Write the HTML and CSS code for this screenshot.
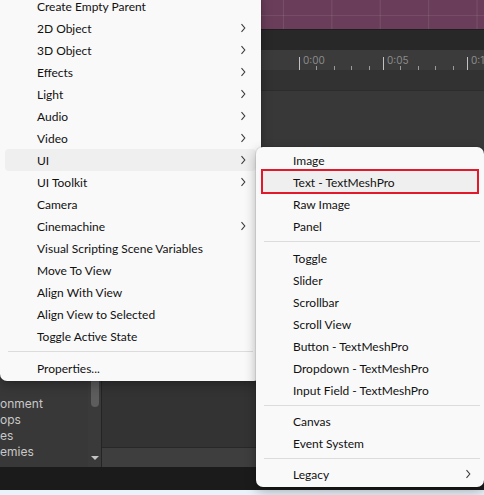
FILE: index.html
```html
<!DOCTYPE html>
<html>
<head>
<meta charset="utf-8">
<link rel="stylesheet" href="styles.css">
</head>
<body>
<div class="editor">
  <div class="scene"></div>
  <div class="toolbar"></div>
  <div class="ruler">
    <div class="ruler-spacer"></div>
    <div class="seg"><span class="major"></span><span class="lbl">0:00</span></div>
    <div class="seg"><span class="major"></span><span class="lbl">0:05</span></div>
    <div class="seg"><span class="major"></span><span class="lbl">0:10</span></div>
  </div>
  <div class="track-head"></div>
  <div class="main">
    <div class="hierarchy">
      <ul class="h-list">
        <li>onment</li>
        <li>ops</li>
        <li>es</li>
        <li>emies</li>
      </ul>
      <div class="h-scroll">
        <div class="thumb"></div>
        <div class="down"></div>
      </div>
    </div>
    <div class="content">
      <div class="content-upper"></div>
      <div class="content-lower"></div>
      <div class="content-strip"></div>
    </div>
  </div>
  <div class="status"></div>
  <div class="taskbar"></div>
</div>

<div class="menu menu-main">
  <div class="item"><span class="label">Create Empty Parent</span></div>
  <div class="item"><span class="label">2D Object</span><svg class="chev" viewBox="0 0 6 10" width="6" height="10"><path d="M1.5 1.2 L4.8 5 L1.5 8.8"/></svg></div>
  <div class="item"><span class="label">3D Object</span><svg class="chev" viewBox="0 0 6 10" width="6" height="10"><path d="M1.5 1.2 L4.8 5 L1.5 8.8"/></svg></div>
  <div class="item"><span class="label">Effects</span><svg class="chev" viewBox="0 0 6 10" width="6" height="10"><path d="M1.5 1.2 L4.8 5 L1.5 8.8"/></svg></div>
  <div class="item"><span class="label">Light</span><svg class="chev" viewBox="0 0 6 10" width="6" height="10"><path d="M1.5 1.2 L4.8 5 L1.5 8.8"/></svg></div>
  <div class="item"><span class="label">Audio</span><svg class="chev" viewBox="0 0 6 10" width="6" height="10"><path d="M1.5 1.2 L4.8 5 L1.5 8.8"/></svg></div>
  <div class="item"><span class="label">Video</span><svg class="chev" viewBox="0 0 6 10" width="6" height="10"><path d="M1.5 1.2 L4.8 5 L1.5 8.8"/></svg></div>
  <div class="item hl"><span class="label">UI</span><svg class="chev" viewBox="0 0 6 10" width="6" height="10"><path d="M1.5 1.2 L4.8 5 L1.5 8.8"/></svg></div>
  <div class="item"><span class="label">UI Toolkit</span><svg class="chev" viewBox="0 0 6 10" width="6" height="10"><path d="M1.5 1.2 L4.8 5 L1.5 8.8"/></svg></div>
  <div class="item"><span class="label">Camera</span></div>
  <div class="item"><span class="label">Cinemachine</span><svg class="chev" viewBox="0 0 6 10" width="6" height="10"><path d="M1.5 1.2 L4.8 5 L1.5 8.8"/></svg></div>
  <div class="item"><span class="label">Visual Scripting Scene Variables</span></div>
  <div class="item"><span class="label">Move To View</span></div>
  <div class="item"><span class="label">Align With View</span></div>
  <div class="item"><span class="label">Align View to Selected</span></div>
  <div class="item"><span class="label">Toggle Active State</span></div>
  <div class="sep"></div>
  <div class="item"><span class="label">Properties...</span></div>
</div>

<div class="menu menu-sub">
  <div class="item"><span class="label">Image</span></div>
  <div class="item hl marked"><span class="label">Text - TextMeshPro</span></div>
  <div class="item"><span class="label">Raw Image</span></div>
  <div class="item"><span class="label">Panel</span></div>
  <div class="sep"></div>
  <div class="item"><span class="label">Toggle</span></div>
  <div class="item"><span class="label">Slider</span></div>
  <div class="item"><span class="label">Scrollbar</span></div>
  <div class="item"><span class="label">Scroll View</span></div>
  <div class="item"><span class="label">Button - TextMeshPro</span></div>
  <div class="item"><span class="label">Dropdown - TextMeshPro</span></div>
  <div class="item"><span class="label">Input Field - TextMeshPro</span></div>
  <div class="sep tight"></div>
  <div class="item"><span class="label">Canvas</span></div>
  <div class="item"><span class="label">Event System</span></div>
  <div class="sep tight"></div>
  <div class="item"><span class="label">Legacy</span><svg class="chev" viewBox="0 0 6 10" width="6" height="10"><path d="M1.5 1.2 L4.8 5 L1.5 8.8"/></svg></div>
</div>
</body>
</html>
```

FILE: styles.css
```css
html, body {
  margin: 0;
  padding: 0;
  width: 484px;
  height: 495px;
  overflow: hidden;
  background: #333333;
}

.editor {
  display: flex;
  flex-direction: column;
  width: 484px;
  height: 495px;
}

.scene {
  height: 29px;
  flex-shrink: 0;
  border-bottom: 1px solid #1e1e1e;
  background-color: #6a3e5a;
  background-image:
    linear-gradient(to bottom, transparent 15px, rgba(255,255,255,0.08) 15px, rgba(255,255,255,0.08) 16px, transparent 16px),
    linear-gradient(to right, rgba(255,255,255,0.09) 1px, transparent 1px);
  background-size: 100% 100%, 48.4px 100%;
  background-position: 0 0, 41px 0;
}

.toolbar {
  height: 20px;
  flex-shrink: 0;
  background: #282828;
}

.ruler {
  height: 20px;
  flex-shrink: 0;
  display: flex;
  background: #3b3b3b;
  overflow: hidden;
}

.ruler-spacer {
  width: 299px;
  flex-shrink: 0;
}

.seg {
  width: 84px;
  flex-shrink: 0;
  display: flex;
  align-items: flex-end;
  background-image: repeating-linear-gradient(to right, transparent 0, transparent 16.8px, #9a9a9a 16.8px, #9a9a9a 17.8px);
  background-size: 100% 4px;
  background-position: left bottom;
  background-repeat: no-repeat;
}

.major {
  width: 1px;
  height: 13px;
  background: #c2c2c2;
  flex-shrink: 0;
}

.lbl {
  font-family: Inter, "Noto Sans", sans-serif;
  font-size: 10px;
  line-height: 13px;
  color: #8b8b8b;
  margin-left: 3px;
  margin-bottom: 3px;
}

.track-head {
  height: 20px;
  flex-shrink: 0;
  background: #323232;
  border-bottom: 1px solid #2c2c2c;
}

.main {
  flex: 1;
  display: flex;
  min-height: 0;
}

.hierarchy {
  width: 101px;
  flex-shrink: 0;
  display: flex;
  background: #383838;
  border-right: 1px solid #242424;
}

.h-list {
  flex: 1;
  margin: 0;
  padding: 0 0 7px 0;
  list-style: none;
  display: flex;
  flex-direction: column;
  justify-content: flex-end;
  font-family: Inter, "Noto Sans", sans-serif;
  font-size: 12px;
  color: #c8c8c8;
  overflow: hidden;
}

.h-list li {
  height: 16px;
  line-height: 16px;
  white-space: nowrap;
}

.h-scroll {
  width: 13px;
  flex-shrink: 0;
  display: flex;
  flex-direction: column;
  align-items: center;
  background: #3a3a3a;
}

.thumb {
  width: 8px;
  height: 316px;
  background: #5d5d5d;
  border-radius: 0 0 4px 4px;
}

.down {
  margin-top: auto;
  margin-bottom: 7px;
  width: 0;
  height: 0;
  border-left: 4px solid transparent;
  border-right: 4px solid transparent;
  border-top: 4px solid #c4c4c4;
}

.content {
  flex: 1;
  display: flex;
  flex-direction: column;
}

.content-upper {
  height: 110px;
  background: #383838;
}

.content-lower {
  flex: 1;
  background: #333333;
}

.content-strip {
  height: 19px;
  background: #3e3e3e;
  border-top: 1px solid #282828;
}

.status {
  height: 23px;
  flex-shrink: 0;
  background: #1b1b1b;
}

.taskbar {
  height: 5px;
  flex-shrink: 0;
  background: #e9f1f9;
}

/* Context menus */
.menu {
  position: absolute;
  box-sizing: border-box;
  background: #f9f9f9;
  border-radius: 7px;
  box-shadow: 0 0 0 1px rgba(0,0,0,0.07), 0 4px 12px rgba(0,0,0,0.3);
  font-family: Lato, "Noto Sans", sans-serif;
  font-size: 12px;
  color: #111111;
}

.menu-main {
  left: 0;
  top: -9px;
  width: 261px;
  padding: 4px 5px 2px;
}

.menu-sub {
  left: 256px;
  top: 147px;
  width: 228px;
  padding: 2px 5px 2px;
}

.item {
  position: relative;
  display: flex;
  align-items: center;
  height: 22px;
  padding: 0 10px 0 32px;
  border-radius: 4px;
  white-space: nowrap;
}

.menu-sub .item {
  padding-right: 8px;
}

.item .label {
  flex: 1;
}

.item.hl {
  background: #efefef;
}

.item.marked::after {
  content: "";
  position: absolute;
  left: 0;
  right: 0;
  top: -2px;
  bottom: -1px;
  border: 2px solid #e3192b;
}

.chev {
  flex-shrink: 0;
}

.chev path {
  fill: none;
  stroke: #3a3a3a;
  stroke-width: 1.1;
}

.sep {
  height: 1px;
  background: #dcdcdc;
  margin: 4px 3px 5px;
}

.menu-sub .sep {
  margin-right: -1px;
}

.menu-sub .sep.tight {
  margin-bottom: 4px;
}
```
